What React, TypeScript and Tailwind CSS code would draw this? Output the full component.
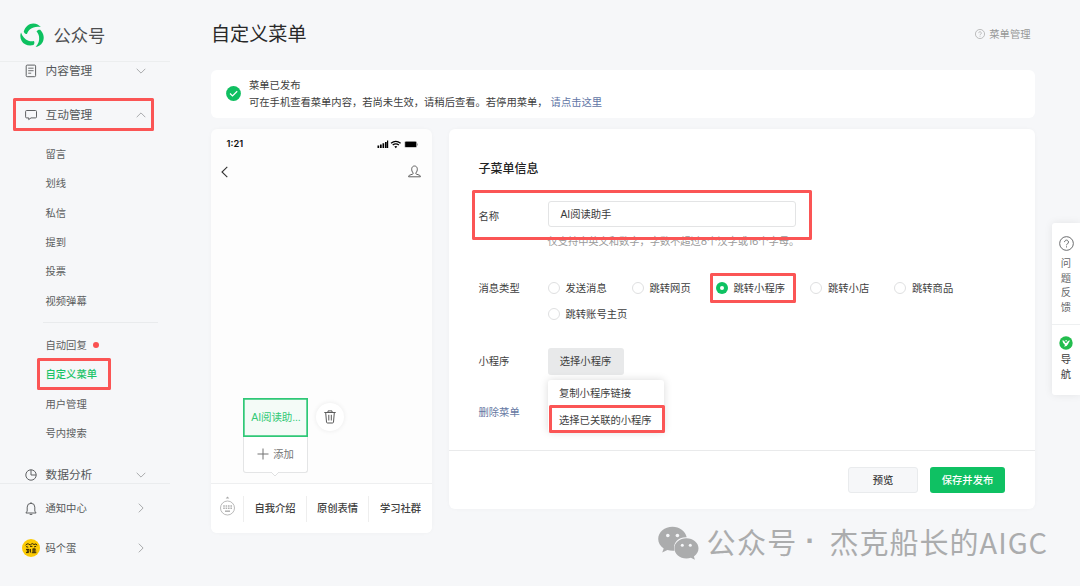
import React from "react";

const Frame = ({ className }: { className: string }) => (
  <span className={`pointer-events-none absolute z-20 rounded-[1.5px] border-3 border-[#fb5555] ${className}`} />
);

const Chevron = ({ className }: { className: string }) => (
  <svg viewBox="0 0 10 10" className={`h-[10px] w-[10px] fill-none stroke-[#a9abad] ${className}`}>
    <path d="M0.7 2.8 5 7.1 9.3 2.8" strokeWidth="1" />
  </svg>
);

const DocIcon = () => (
  <svg viewBox="0 0 12 14" className="h-[14px] w-[12px] fill-none stroke-[#5f6163]">
    <rect x="1.2" y="1.1" width="9.4" height="11.6" rx="1" />
    <path d="M3.2 4.2h5.4M3.2 6.7h5.4M3.2 9.2h3" strokeWidth="0.9" />
  </svg>
);

const ChatIcon = () => (
  <svg viewBox="0 0 12 12" className="h-[12px] w-[12px] fill-none stroke-[#5f6163]">
    <path d="M1.6 1.5h8.9q1 0 1 1v5.4q0 1-1 1H6L3.7 10.6V8.9H1.6q-1 0-1-1V2.5q0-1 1-1Z" />
  </svg>
);

const PieIcon = () => (
  <svg viewBox="0 0 12 12" className="h-[12px] w-[12px] fill-none stroke-[#5f6163]">
    <circle cx="6" cy="6" r="5.2" />
    <path d="M6 .8V6h5.2" />
  </svg>
);

const BellIcon = () => (
  <svg viewBox="0 0 12 13" className="h-[13px] w-[12px] fill-none stroke-[#5f6163]">
    <path d="M.9 11h10.200L9.800 9.100V5.100a3.800 3.800 0 0 0-7.600 0v4L.9 11ZM6 .2v1.200M4.700 12.400h2.600" />
  </svg>
);

const Avatar = () => (
  <svg viewBox="0 0 18 18" className="h-[18px] w-[18px]">
    <circle cx="9" cy="9" r="9" fill="#fccb05" />
    <path
      d="M3.600 6.200q1.400-2 3-1.200l1.600 1 2-1.500 1.800 1 2-.6 1 1.400M4 7.600l2.200.6M8 7.400h2.400M12 7.900l2.200-.6M4 10.400h3l-.5 3.200H4M8.400 10v3.600M10.200 10.200h3.800M10 12h4.200M9.800 13.700h4.500M12 9v4.500M5.300 10.500v3"
      fill="none"
      stroke="#33290a"
      strokeWidth="1"
    />
  </svg>
);

const LogoBlade = ({ angle }: { angle: number }) => (
  <path
    transform={`rotate(${angle} 12 12)`}
    d="M3.600 8.300C4.900 3.500 8.600.4 12.700.4c3.200.1 5.600 1.300 7.300 3.500-3.900-.9-7.600-.1-10.300 2.200-1.500 1.300-2.500 2.800-3 4.500C5.200 10.400 4.200 9.800 3.600 8.300Z"
  />
);

const Logo = () => (
  <svg viewBox="0 0 24 24" className="h-[25px] w-[25px] fill-[#0dc160]">
    <LogoBlade angle={0} />
    <LogoBlade angle={120} />
    <LogoBlade angle={240} />
    <path d="m6 16.500-1 2.800 2.800-.7Z" />
  </svg>
);

const HelpIcon = ({ className }: { className: string }) => (
  <svg viewBox="0 0 16 16" className={`fill-none ${className}`}>
    <circle cx="8" cy="8" r="7.3" />
    <path d="M5.9 6.500a2.100 2.100 0 1 1 3.200 1.800C8.300 8.800 8 9.100 8 9.900M8 11v1.200" />
  </svg>
);

const Row = ({ icon, label, arrow, className }: { icon: React.ReactNode; label: string; arrow: string; className: string }) => (
  <div className={`relative flex shrink-0 items-center pl-[21px] ${className}`}>
    <span className="flex w-5 justify-center">{icon}</span>
    <span className="ml-[4.5px] flex-1 pb-[1.5px]">{label}</span>
    <Chevron className={`mr-[24px] ${arrow}`} />
  </div>
);

const SubItem = ({ label }: { label: string }) => (
  <div className="flex h-[29.4px] shrink-0 items-center pb-[0.5px] pl-[45.5px] text-[10.3px] text-[#5c5e60]">{label}</div>
);

const Sidebar = () => (
  <aside className="flex h-full w-[170px] shrink-0 flex-col text-[#55575a]">
    <header className="flex h-[62px] shrink-0 items-center border-b border-[#eceeef] pt-[9px] pl-5">
      <Logo />
      <span className="ml-[8.5px] text-[17.3px] text-[#4c4e50]">公众号</span>
    </header>
    <nav className="flex h-[422px] shrink-0 flex-col overflow-hidden border-b border-[#eaecee] text-[11.7px]">
      <Row className="h-[18px]" icon={<DocIcon />} label="内容管理" arrow="" />
      <div className="relative mt-[18px] shrink-0">
        <Row className="h-[34px]" icon={<ChatIcon />} label="互动管理" arrow="rotate-180" />
        <Frame className="top-0 left-[13px] h-[33px] w-[141px]" />
      </div>
      <div className="mt-[7px] shrink-0">
        {["留言", "划线", "私信", "提到", "投票", "视频弹幕"].map((t) => (
          <SubItem key={t} label={t} />
        ))}
      </div>
      <div className="mt-[7px] mr-3 mb-[7px] ml-[43px] h-px shrink-0 bg-[#e9ebed]" />
      <div className="relative shrink-0">
        <SubItem label="自动回复" />
        <span className="absolute top-[11.5px] left-[92.5px] h-[6px] w-[6px] rounded-full bg-[#fa5151]" />
      </div>
      <div className="relative flex h-[29.4px] shrink-0 items-center pb-[1px] pl-[45.5px] text-[10.3px] font-medium text-[#1bc468]">
        自定义菜单
        <Frame className="top-[-1.5px] left-[37px] h-8 w-[74px]" />
      </div>
      <SubItem label="用户管理" />
      <SubItem label="号内搜索" />
      <Row className="mt-[18px] h-[18px]" icon={<PieIcon />} label="数据分析" arrow="" />
    </nav>
    <div className="pt-[4px] text-[10.3px]">
      <Row className="h-10" icon={<BellIcon />} label="通知中心" arrow="-rotate-90" />
      <Row className="h-10" icon={<Avatar />} label="码个蛋" arrow="-rotate-90" />
    </div>
  </aside>
);

const Phone = () => (
  <section className="flex h-[404px] w-[221px] shrink-0 flex-col rounded-md bg-[#fdfdfd] shadow-[0_0_4px_rgba(0,0,0,0.03)]">
    <div className="flex h-[30px] items-center justify-between pr-[14px] pl-[15.5px]">
      <span className="font-[Inter] text-[9.3px] font-semibold text-[#111]">1:21</span>
      <svg viewBox="0 0 41 10" className="h-[10px] w-[41px]">
        <path d="M.5 6.500h1.700V9H.5ZM3 5.500h1.700V9H3ZM5.500 4.300h1.700V9H5.500ZM8 3h1.700V9H8ZM10 1.500h1.200V9H10Z" />
        <path d="M14 4.200q4.800-3.600 9.600 0M15.700 6q3.100-2.300 6.200 0" fill="none" stroke="#000" strokeWidth="1.4" />
        <path d="m18.800 9.200-1.500-1.700q1.500-1 3 0Z" />
        <rect x="27.400" y="2" width="12.600" height="6.800" rx="1.500" fill="#bbb" />
        <rect x="28.200" y="2.700" width="11" height="5.400" rx=".7" />
        <path d="M40.500 4.500v2" stroke="#aaa" />
      </svg>
    </div>
    <div className="flex h-[25px] items-center justify-between pr-[11px] pl-[9px]">
      <svg viewBox="0 0 9 12" className="h-3 w-[9px] fill-none stroke-[#333]">
        <path d="M7.300.9 2 6l5.300 5.100" strokeWidth="1.1" />
      </svg>
      <svg viewBox="0 0 13 13" className="h-[13px] w-[13px] fill-none stroke-[#4f4f4f]">
        <path d="M5.200 8C2.900 5.800 3.100 1 6.500 1S10.100 5.800 7.800 8q-.3.700.6 1.100l3.300 1.200q.7.400.7 1.500H.6q0-1.100.7-1.500l3.300-1.200q.9-.4.600-1.100Z" strokeWidth=".9" />
      </svg>
    </div>
    <div className="flex flex-1 items-end pb-[10px] pl-8">
      <div className="relative w-[65px] text-center text-[10.5px]">
        <div className="flex h-[39px] items-center justify-center border border-[#2fc877] bg-[#f4fbf7] text-[#32c975] shadow-[inset_0_0_0_0.7px_#2fc877]">
          <span className="pt-[1px] pl-[1px] font-['Liberation_Sans','Noto_Sans_CJK_SC',sans-serif] tracking-[-0.1px]">AI阅读助...</span>
        </div>
        <div className="flex h-[36px] items-center justify-center gap-1 rounded-b-[3px] border border-t-0 border-[#e4e5e6] bg-white pb-[1px] text-[10.3px] text-[#747474]">
          <svg viewBox="0 0 12 12" className="h-[12px] w-[12px] stroke-[#737373]">
            <path d="M6 .5v11M.5 6h11" />
          </svg>
          添加
        </div>
        <svg viewBox="0 0 8 5" className="absolute top-[74px] left-7 h-[5px] w-2 fill-white stroke-[#e0e1e2]">
          <path d="M0 0l4 4 4-4" />
        </svg>
      </div>
      <div className="mb-[42px] ml-2 flex h-7 w-7 items-center justify-center rounded-full bg-white shadow-[0_0_5px_rgba(0,0,0,0.08)]">
        <svg viewBox="0 0 12 14" className="h-[14px] w-[12px] fill-none stroke-[#595959]">
          <path d="M.3 2.500h11.400M4 2.200V.9h4v1.300M1.700 2.700l.8 9.400q.1.900 1 .9h5q.9 0 1-.9l.8-9.400M4.800 4.800v5.700M7.300 4.800v5.700" />
        </svg>
      </div>
    </div>
    <div className="flex h-[50px] shrink-0 items-center rounded-b-md border-t border-[#eeeff0] bg-white pl-[8px] text-[10.3px] font-medium text-[#404040]">
      <svg viewBox="0 0 16 20" className="mb-[5px] h-5 w-4 fill-none stroke-[#b1b1b1]">
        <circle cx="8.500" cy="12" r="7" strokeWidth=".9" />
        <path d="M6.700 2.400 8.500.6l1.800 1.800Z" fill="#aaa" stroke="none" />
        <path d="M4.200 10h8.800M4.200 12.200h8.800" strokeWidth="1.5" strokeDasharray="1.6 .8" />
        <path d="M6 15.200h5" strokeWidth="1.5" />
      </svg>
      <div className="ml-[8px] flex h-[26px] w-[63px] items-center justify-center border-l border-[#eee] pb-[2px]">自我介绍</div>
      <div className="flex h-[26px] w-[62px] items-center justify-center border-l border-[#eee] pb-[2px]">原创表情</div>
      <div className="flex h-[26px] flex-1 items-center justify-center border-l border-[#eee] pb-[2px]">学习社群</div>
    </div>
  </section>
);

const Radio = ({ label, checked = false, className }: { label: string; checked?: boolean; className: string }) => (
  <div className={`relative flex h-[26px] items-center ${className}`}>
    <span className={`flex h-3 w-3 items-center justify-center rounded-full ${checked ? "bg-[#0ec262]" : "border border-[#dfe0e1] bg-white"}`}>
      {checked && <span className="h-1 w-1 rounded-full bg-white" />}
    </span>
    <span className="ml-[6px]">{label}</span>
    {checked && <Frame className="top-[-2px] left-[-5.5px] h-[30px] w-[85.5px]" />}
  </div>
);

const Form = () => (
  <section className="flex h-[380px] w-[586px] shrink-0 flex-col rounded-md bg-white text-[10.3px] text-[#3e3e3e] shadow-[0_0_4px_rgba(0,0,0,0.03)]">
    <div className="flex h-[321px] flex-col pl-[29.5px]">
      <h2 className="mt-[29px] h-5 text-[12px] leading-5 font-medium text-[#222]">子菜单信息</h2>
      <div className="relative mt-[23px] flex h-[26px] items-center">
        <span className="w-[69px] pt-[4px]">名称</span>
        <div className="flex h-[26px] w-[248px] items-center rounded-[3px] border border-[#e3e4e5] pt-[1px] pl-3 font-['Liberation_Sans','Noto_Sans_CJK_SC',sans-serif] text-[#3a3a3a]">AI阅读助手</div>
        <Frame className="top-[-11.5px] left-[-6.5px] h-[50px] w-[340px]" />
      </div>
      <p className="mt-[6px] ml-[69px] h-4 leading-4 tracking-[-0.08px] text-[#9a9a9a]">
        仅支持中英文和数字，字数不超过<span className="font-[Inter]">8</span>个汉字或<span className="font-[Inter]">16</span>个字母。
      </p>
      <div className="mt-[26px] flex">
        <span className="w-[69px] leading-[26px]">消息类型</span>
        <div className="flex w-[450px] flex-wrap">
          <Radio className="w-[84px]" label="发送消息" />
          <Radio className="w-[84px]" label="跳转网页" />
          <Radio className="w-[94.5px]" label="跳转小程序" checked />
          <Radio className="w-[84px]" label="跳转小店" />
          <Radio className="w-[84px]" label="跳转商品" />
          <Radio className="w-full" label="跳转账号主页" />
        </div>
      </div>
      <div className="relative mt-[21px] flex items-center">
        <span className="w-[69px] pb-[1px]">小程序</span>
        <div className="flex h-[27px] w-[76px] items-center justify-center rounded-[3px] bg-[#e8e9ea] pb-[1px]">选择小程序</div>
        <div className="absolute top-[32px] left-[69px] z-10 h-[52px] w-[116px] rounded-[3px] bg-white shadow-[0_0_8px_rgba(0,0,0,0.15)]">
          <div className="flex h-[26px] items-center pl-[11.5px]">复制小程序链接</div>
          <div className="flex h-[27px] items-center pl-[11.5px]">选择已关联的小程序</div>
          <Frame className="top-[25px] left-[1px] h-[28px] w-[116px]" />
        </div>
      </div>
      <a className="mt-[29px] leading-4 text-[#6678a3]">删除菜单</a>
    </div>
    <footer className="flex flex-1 items-center justify-end gap-3 border-t border-[#e9eaeb] pr-[30px]">
      <button className="h-[26px] w-[70px] rounded-[3px] border border-[#e9ebed] bg-[#f6f7f9] font-medium">预览</button>
      <button className="h-[26px] w-[75px] rounded-[3px] bg-[#0fc163] font-medium text-white">保存并发布</button>
    </footer>
  </section>
);

const Widget = () => (
  <div className="absolute top-[223px] right-0 w-[28px] rounded-l-[3px] bg-white text-[10.3px] shadow-[0_0_8px_rgba(0,0,0,0.08)]">
    <div className="flex h-[102px] flex-col items-center border-b border-[#eef0f1] pt-[13px] text-[#66686a]">
      <HelpIcon className="mb-[5px] h-[15px] w-[15px] stroke-[#606264]" />
      {["问", "题", "反", "馈"].map((c) => (
        <span key={c} className="h-[14.5px] leading-[14.5px]">{c}</span>
      ))}
    </div>
    <div className="flex h-[70px] flex-col items-center pt-[11px] text-[#3c3c3c]">
      <svg viewBox="0 0 14 14" className="mb-[2px] h-[14px] w-[14px]">
        <circle cx="7" cy="7" r="6.7" fill="#23bd4e" />
        <path d="M3.300 4.500q2-.4 2.400 1.200.2 1.300 1.300 1.300 1-.2 1.500-1.400.6-1.300 2.600-1.200Q9.800 6 9.100 7.900 8 10.700 4.900 10.500q1.100-.7 1-1.700Q3.900 7.800 3.300 4.500Z" fill="#fff" />
        <circle cx="7.100" cy="4.800" r=".8" fill="#fff" />
      </svg>
      {["导", "航"].map((c) => (
        <span key={c} className="h-[14.7px] leading-[14.7px]">{c}</span>
      ))}
    </div>
  </div>
);

const Watermark = () => (
  <div className="absolute top-[523px] left-[657.5px] flex h-10 items-center text-[#abacad]">
    <svg viewBox="0 0 41 34" className="mb-[1px] h-[34px] w-[41px] fill-[#abacad]">
      <path d="M14.500.8C6.600.8.200 6.100.200 13c0 3.900 2 7.200 5.500 9.500l-1.500 4 5.200-2.500q2.500.8 5.300.8h1.700C14.500 17.500 19.700 11.300 28 11.300h.7C27.400 5 21.500.8 14.500.8Z" />
      <path d="M28.400 12.200c-6.700 0-12 4.400-12 10.100s5.300 10.200 12 10.200q2.400 0 4.500-.7l4 2-1-3.300c2.900-2 4.600-4.900 4.600-8.200 0-5.700-5.400-10.100-12.100-10.100Z" />
      <g fill="#f6f7f9">
        <circle cx="9.800" cy="9.500" r="1.800" />
        <circle cx="19.400" cy="9.500" r="1.800" />
        <circle cx="24.300" cy="19.300" r="1.500" />
        <circle cx="32.300" cy="19.300" r="1.500" />
      </g>
    </svg>
    <div className="ml-2 flex pb-[4px] text-[29px] leading-10 tracking-[1px] whitespace-nowrap">
      <span className="w-[99px] tracking-[1.4px]">公众号</span>
      <span className="w-[24px] font-['Liberation_Sans',sans-serif] font-bold tracking-normal">·</span>
      <span>杰克船长的AIGC</span>
    </div>
  </div>
);

export default function App() {
  return (
    <div className="relative flex h-[586px] w-[1080px] overflow-hidden bg-[#f6f7f9] font-['Noto_Sans_CJK_SC',sans-serif] leading-normal">
      <Sidebar />
      <main className="ml-[41px] flex w-[824px] shrink-0 flex-col">
        <header className="flex h-[70px] items-center justify-between pr-[4.5px] pb-[3px]">
          <h1 className="text-[19.1px] text-[#292929]">自定义菜单</h1>
          <span className="flex items-center gap-[4px] text-[10.3px] text-[#979797]">
            <HelpIcon className="h-[10px] w-[10px] stroke-[#9c9c9c]" />
            菜单管理
          </span>
        </header>
        <section className="flex h-[48px] items-center rounded-md bg-white pb-[1px] pl-[15px] text-[10.3px] leading-[16.5px] text-[#404040]">
          <svg viewBox="0 0 15 15" className="mr-[8px] h-[15px] w-[15px]">
            <circle cx="7.500" cy="7.500" r="7.400" fill="#10bf61" />
            <path d="m4 7.500 2.500 2.400 4.700-4.600" fill="none" stroke="#fff" strokeWidth="1.2" />
          </svg>
          <div>
            <p>菜单已发布</p>
            <p>
              可在手机查看菜单内容，若尚未生效，请稍后查看。若停用菜单，
              <a className="ml-[3px] text-[#6276a6]">请点击这里</a>
            </p>
          </div>
        </section>
        <div className="mt-[11px] flex gap-[17px]">
          <Phone />
          <Form />
        </div>
      </main>
      <Widget />
      <Watermark />
    </div>
  );
}
